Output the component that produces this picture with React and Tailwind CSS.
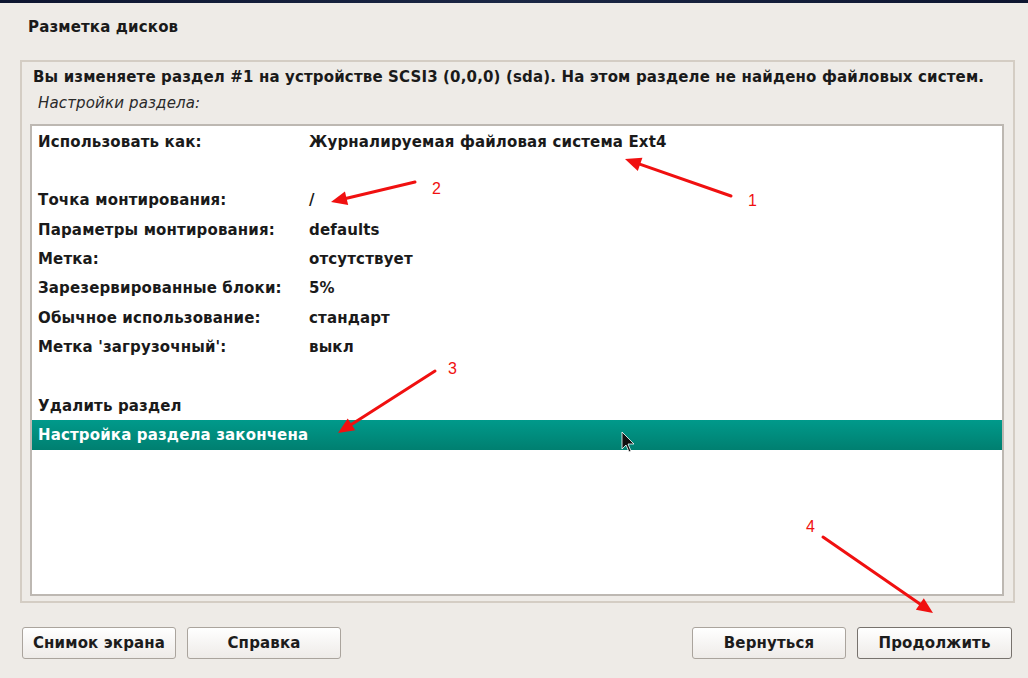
import React from "react";

const rows = [
  { label: "Использовать как:", value: "Журналируемая файловая система Ext4" },
  { blank: true },
  { label: "Точка монтирования:", value: "/" },
  { label: "Параметры монтирования:", value: "defaults" },
  { label: "Метка:", value: "отсутствует" },
  { label: "Зарезервированные блоки:", value: "5%" },
  { label: "Обычное использование:", value: "стандарт" },
  { label: "Метка 'загрузочный':", value: "выкл" },
  { blank: true },
  { label: "Удалить раздел" },
  { label: "Настройка раздела закончена", selected: true },
];

function Button({ children, primary, className = "" }) {
  return (
    <button
      className={`h-[32px] rounded-[3px] border bg-gradient-to-b from-white to-[#eeebe8] text-[15px] font-bold text-[#1c1c1c] tracking-[0.15px] ${
        primary ? "border-[#77726d]" : "border-[#aaa49d]"
      } ${className}`}
    >
      {children}
    </button>
  );
}

function Arrow({ x1, y1, x2, y2 }) {
  const dx = x2 - x1;
  const dy = y2 - y1;
  const len = Math.hypot(dx, dy);
  const ux = dx / len;
  const uy = dy / len;
  const hl = 16;
  const hw = 7;
  const bx = x2 - ux * hl;
  const by = y2 - uy * hl;
  const p1 = `${bx - uy * hw},${by + ux * hw}`;
  const p2 = `${bx + uy * hw},${by - ux * hw}`;
  return (
    <g>
      <line x1={x1} y1={y1} x2={bx + ux * 2} y2={by + uy * 2} stroke="#f01010" strokeWidth="3" strokeLinecap="round" />
      <polygon points={`${x2},${y2} ${p1} ${p2}`} fill="#f01010" />
    </g>
  );
}

export default function App() {
  return (
    <div
      className="relative w-[1028px] h-[678px] overflow-hidden bg-[#eeebe7] flex flex-col tracking-[0.15px]"
      style={{ fontFamily: '"DejaVu Sans", Verdana, sans-serif' }}
    >
      <div className="h-[3px] bg-gradient-to-r from-[#0d1530] via-[#1b2745] to-[#0d1530]" />

      <div className="pl-[28px] pt-[14px] h-[57px] text-[15px] leading-[20px] font-bold text-[#1a1a1a]">
        Разметка дисков
      </div>

      <div className="ml-[20px] w-[995px] h-[543px] border-2 border-[#d4cdc4] flex flex-col">
        <div className="pl-[11px] pt-[6px] text-[15px] font-bold text-[#1a1a1a] leading-[18px] whitespace-nowrap">
          Вы изменяете раздел #1 на устройстве SCSI3 (0,0,0) (sda). На этом разделе не найдено файловых систем.
        </div>
        <div className="pl-[16px] pt-[8px] text-[15px] italic text-[#2a2a2a] leading-[18px]">
          Настройки раздела:
        </div>
        <div className="mt-[12px] ml-[8px] w-[974px] h-[472px] bg-white border-2 border-[#bdb8b2] pt-[1.5px]">
          {rows.map((r, i) =>
            r.blank ? (
              <div key={i} className="h-[29.3px]" />
            ) : (
              <div
                key={i}
                className={`h-[29.3px] flex items-center pl-[6px] text-[15px] font-bold ${
                  r.selected
                    ? "bg-gradient-to-b from-[#009a8b] to-[#007f70] text-white"
                    : "text-[#1a1a1a]"
                }`}
              >
                <span className="w-[271px]">{r.label}</span>
                {r.value && <span>{r.value}</span>}
              </div>
            )
          )}
        </div>
      </div>

      <div className="flex items-center pt-[24px] pl-[22px] pr-[16px]">
        <Button className="w-[154px]">Снимок экрана</Button>
        <Button className="w-[154px] ml-[11px]">Справка</Button>
        <div className="flex-1" />
        <Button className="w-[154px]">Вернуться</Button>
        <Button primary className="w-[155px] ml-[11px]">Продолжить</Button>
      </div>

      <svg className="absolute left-0 top-0 pointer-events-none" width="1028" height="678">
        <Arrow x1={731} y1={196} x2={625} y2={159} />
        <Arrow x1={415} y1={182} x2={331} y2={202} />
        <Arrow x1={435} y1={371} x2={338} y2={433} />
        <Arrow x1={823} y1={537} x2={933} y2={613} />
        <text x="748" y="206" fill="#f01010" fontSize="16" fontFamily="Liberation Sans, sans-serif">1</text>
        <text x="432" y="194" fill="#f01010" fontSize="16" fontFamily="Liberation Sans, sans-serif">2</text>
        <text x="448" y="374" fill="#f01010" fontSize="16" fontFamily="Liberation Sans, sans-serif">3</text>
        <text x="806" y="532" fill="#f01010" fontSize="16" fontFamily="Liberation Sans, sans-serif">4</text>
        <polygon
          points="622,432 622,449 626,445 629,452 631,451 628,444 634,444"
          fill="#111"
          stroke="#fff"
          strokeWidth="0.8"
        />
      </svg>
    </div>
  );
}
